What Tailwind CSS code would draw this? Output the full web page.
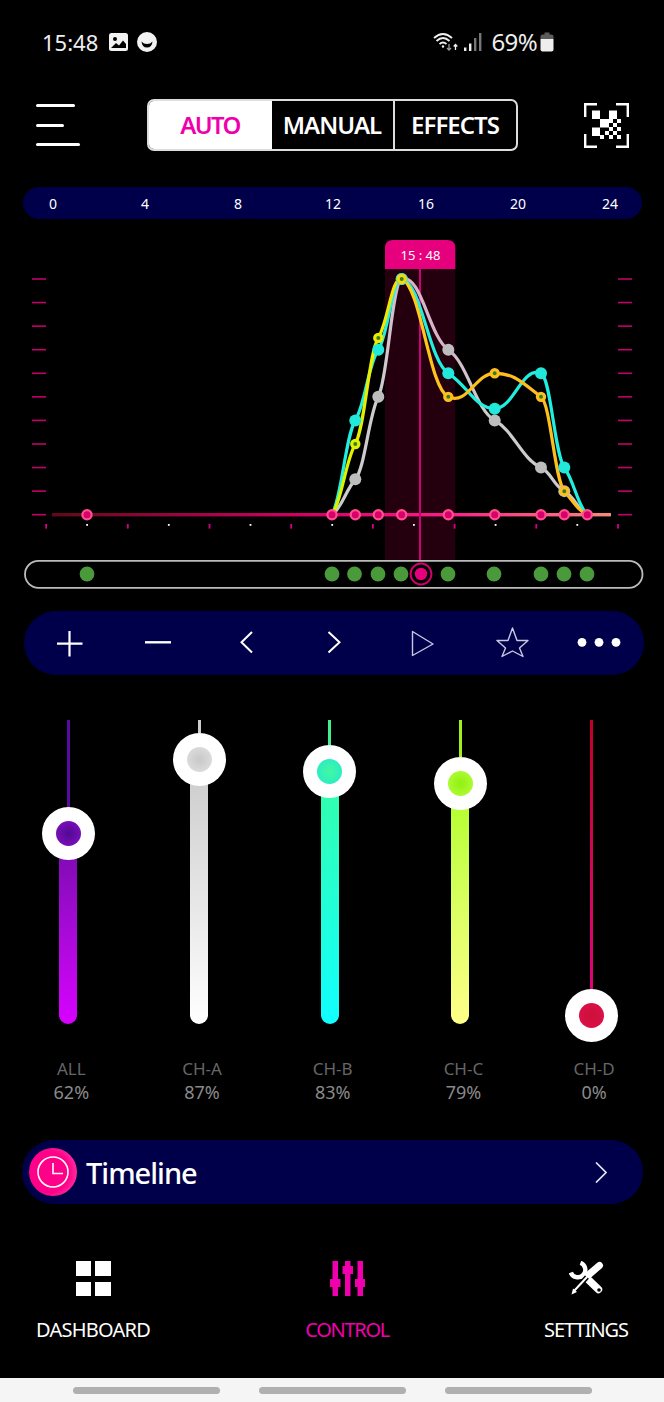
<!DOCTYPE html>
<html>
<head>
<title>Light Control</title>
<meta name="viewport" content="width=device-width, initial-scale=1.0">
<script src="https://cdn.jsdelivr.net/npm/@tailwindcss/browser@4"></script>
<script>
const SVG_NS = "http://www.w3.org/2000/svg";
const BASE_Y = 514.7;
const LEVEL = 23.57;
const pointX = [332, 355.3, 378.3, 401.7, 448.3, 494.7, 541, 564.3, 587.3];

const series = [
  { stroke: "url(#grayLine)", levels: [0, 1.5, 5, 10, 7, 4, 2, 1, 0], dot: "#bdbdbd" },
  { stroke: "#22eee0", levels: [0, 4, 7, 10, 6, 4.5, 6, 2, 0], dot: "#22e8dc" },
  { stroke: "url(#yellowLine)", levels: [0, 3, 7.5, 10, 5, 6, 5, 1, 0], ring: true },
];

function el(parent, name, attrs) {
  const node = document.createElementNS(SVG_NS, name);
  for (const key in attrs) node.setAttribute(key, attrs[key]);
  parent.appendChild(node);
  return node;
}

// spline with flattened tangents, gives the wavy look of the chart
function curvePath(pts) {
  const slope = (i) => {
    const a = pts[i - 1] ?? pts[i];
    const b = pts[i + 1] ?? pts[i];
    return ((b[1] - a[1]) / (b[0] - a[0])) * 0.45;
  };
  let d = `M${pts[0][0]} ${pts[0][1]}`;
  for (let i = 0; i < pts.length - 1; i++) {
    const [x1, y1] = pts[i];
    const [x2, y2] = pts[i + 1];
    const h = (x2 - x1) * 0.42;
    d += ` C${x1 + h} ${y1 + slope(i) * h},${x2 - h} ${y2 - slope(i + 1) * h},${x2} ${y2}`;
  }
  return d;
}

addEventListener("DOMContentLoaded", () => {
  const ticks = document.getElementById("ticks");
  for (let i = 0; i <= 10; i++) {
    const y = 279 + i * LEVEL;
    el(ticks, "line", { x1: 32, x2: 46, y1: y, y2: y, stroke: "#c4006c", "stroke-width": 1.6 });
    el(ticks, "line", { x1: 618, x2: 632, y1: y, y2: y, stroke: "#c4006c", "stroke-width": 1.6 });
  }
  for (let i = 0; i < 8; i++) {
    el(ticks, "rect", { x: 45.2 + i * 81.7, y: 524, width: 1.8, height: 4.6, fill: "#d4008a" });
    if (i < 7) el(ticks, "rect", { x: 86.2 + i * 81.7, y: 524, width: 1.8, height: 1.8, fill: "#ffffff" });
  }

  const curves = document.getElementById("curves");
  for (const s of series) {
    const pts = s.levels.map((lv, i) => [pointX[i], BASE_Y - lv * LEVEL]);
    el(curves, "path", { d: curvePath(pts), fill: "none", stroke: s.stroke, "stroke-width": 3.2 });
  }
  for (const s of series) {
    s.levels.forEach((lv, i) => {
      if (i === 0 || i === 8) return;
      const y = BASE_Y - lv * LEVEL;
      if (s.ring) {
        el(curves, "circle", { cx: pointX[i], cy: y, r: 3.6, fill: "#2f7f28", stroke: s.stroke, "stroke-width": 3.2 });
      } else {
        el(curves, "circle", { cx: pointX[i], cy: y, r: 6, fill: s.dot });
      }
    });
  }

  const basePoints = document.getElementById("basePoints");
  for (const x of [87, ...pointX]) {
    el(basePoints, "circle", { cx: x, cy: BASE_Y, r: 4.6, fill: "#d8006c", stroke: "#ff4f8e", "stroke-width": 2.2 });
  }

  const trackDots = document.getElementById("trackDots");
  for (const x of [87, 332, 354.5, 378, 401, 448, 494, 541, 564, 587]) {
    el(trackDots, "circle", { cx: x, cy: 574, r: 7.4, fill: "#4a9a3c" });
  }
});
</script>
</head>
<body class="bg-black">
<div class="flex flex-col w-[664px] h-[1402px] bg-black text-white overflow-hidden font-['Noto_Sans',sans-serif]">

  <!-- status bar -->
  <div class="flex items-center justify-between h-[83px] pl-[42px] pr-[110px] shrink-0 text-[#eeeeee]">
    <div class="flex items-center">
      <span class="text-[22px] leading-none">15:48</span>
      <svg class="ml-[11px]" width="19" height="18" viewBox="0 0 19 18">
        <rect width="19" height="18" rx="2.5" fill="#f2f2f2"/>
        <circle cx="6" cy="6" r="2" fill="#000"/>
        <path d="M2 15 L7 10 L10 12.5 L14 7.5 L17 11 L17 15 Z" fill="#000"/>
      </svg>
      <svg class="ml-[9px]" width="20" height="20" viewBox="0 0 20 20">
        <circle cx="10" cy="10" r="10" fill="#f2f2f2"/>
        <path d="M4.5 9.5 Q5 15.5 10 15.5 Q15 15.5 15.5 9.5 Q13.5 12 10 12 Q6.5 12 4.5 9.5 Z" fill="#000"/>
      </svg>
    </div>
    <div class="flex items-center">
      <svg width="25" height="19" viewBox="0 0 25 19" fill="none" stroke="#f0f0f0" stroke-width="1.8">
        <path d="M1 6 Q10 -2 19 6"/>
        <path d="M3.5 9 Q10 3 16.5 9"/>
        <path d="M6.5 12 Q10 9 13.5 12"/>
        <circle cx="10" cy="14.5" r="1.2" fill="#f0f0f0" stroke="none"/>
        <path d="M16 12 V18 M14 16 L16 18 L18 16" stroke-width="1.3" stroke="#999"/>
        <path d="M22.5 18 V12.5 M20.7 14.5 L22.5 12.5 L24.3 14.5" stroke-width="1.3"/>
      </svg>
      <svg class="ml-[6px]" width="18" height="18" viewBox="0 0 18 18">
        <rect x="0" y="14.5" width="2.4" height="3.5" fill="#eeeeee"/>
        <rect x="5" y="10.5" width="2.4" height="7.5" fill="#eeeeee"/>
        <rect x="10" y="5" width="2.4" height="13" fill="#777777"/>
        <rect x="15" y="0" width="2.4" height="18" fill="#777777"/>
      </svg>
      <span class="ml-[9px] text-[24px] leading-none tracking-[-0.6px]">69%</span>
      <svg class="ml-[3px]" width="14" height="20" viewBox="0 0 14 20">
        <path d="M4.5 0.5 H9.5 V2.5 H11.5 Q13.5 2.5 13.5 4.5 V7 H0.5 V4.5 Q0.5 2.5 2.5 2.5 H4.5 Z" fill="#5c5c5c"/>
        <path d="M0.5 7 H13.5 V17.5 Q13.5 19.5 11.5 19.5 H2.5 Q0.5 19.5 0.5 17.5 Z" fill="#eeeeee"/>
      </svg>
    </div>
  </div>

  <!-- header -->
  <div class="flex items-center justify-between h-[52px] mt-[16px] pl-[36px] pr-[35px] shrink-0">
    <div class="flex flex-col gap-[16.5px] w-[44px]">
      <div class="h-[3px] w-[39px] bg-white rounded-full"></div>
      <div class="h-[3px] w-[28px] bg-white rounded-full"></div>
      <div class="h-[3px] w-[44px] bg-white rounded-full"></div>
    </div>
    <div class="flex w-[371px] h-[52px] border-2 border-[#dddddd] rounded-[7px] overflow-hidden text-[24px] font-semibold tracking-[-1px]">
      <div class="flex items-center justify-center w-[123px] bg-white text-[#f000ac] tracking-[-1.6px]">AUTO</div>
      <div class="flex items-center justify-center w-[123px] border-r-2 border-[#dddddd]">MANUAL</div>
      <div class="flex items-center justify-center flex-1">EFFECTS</div>
    </div>
    <svg width="45" height="45" viewBox="0 0 45 45" fill="#ffffff">
      <path d="M1.2 14 V1.2 H13 M32 1.2 H43.8 V14 M1.2 31 V43.8 H13 M32 43.8 H43.8 V31" fill="none" stroke="#ffffff" stroke-width="2.4"/>
      <rect x="8" y="7.5" width="8" height="8.5"/>
      <rect x="25" y="7.5" width="8" height="8.5"/>
      <rect x="16" y="16" width="9" height="8.5"/>
      <rect x="8" y="24.5" width="8" height="8.5"/>
      <rect x="25" y="16" width="4" height="4"/>
      <rect x="33" y="16" width="4" height="4"/>
      <rect x="29" y="20" width="4" height="4"/>
      <rect x="33" y="24" width="4" height="4"/>
      <rect x="25" y="24" width="4" height="4"/>
      <rect x="29" y="28" width="4" height="4"/>
      <rect x="21" y="28" width="4" height="4"/>
      <rect x="16" y="32" width="4" height="4"/>
      <rect x="25" y="32" width="4" height="4"/>
      <rect x="33" y="32" width="4" height="4"/>
    </svg>
  </div>

  <!-- hours -->
  <div class="flex items-center h-[32px] mt-[36px] mx-[22.5px] pl-[18.5px] bg-[#00004a] rounded-full text-[14px] shrink-0">
    <span class="w-[24px] text-center">0</span>
    <span class="w-[24px] ml-[68px] text-center">4</span>
    <span class="w-[24px] ml-[69px] text-center">8</span>
    <span class="w-[24px] ml-[71px] text-center">12</span>
    <span class="w-[24px] ml-[69px] text-center">16</span>
    <span class="w-[24px] ml-[68px] text-center">20</span>
    <span class="w-[24px] ml-[68px] text-center">24</span>
  </div>

  <!-- chart and time track -->
  <svg class="shrink-0" width="664" height="371" viewBox="0 219 664 371">
    <defs>
      <linearGradient id="baseLine" gradientUnits="userSpaceOnUse" x1="52" x2="611" y1="0" y2="0">
        <stop offset="0" stop-color="#5e0a1a"/>
        <stop offset="0.5" stop-color="#e0006f"/>
        <stop offset="0.72" stop-color="#ff1f8a"/>
        <stop offset="1" stop-color="#f88a7a"/>
      </linearGradient>
      <linearGradient id="yellowLine" gradientUnits="userSpaceOnUse" x1="340" x2="450" y1="0" y2="0">
        <stop offset="0" stop-color="#d8f500"/>
        <stop offset="0.4" stop-color="#f0ea00"/>
        <stop offset="0.7" stop-color="#ffc81a"/>
        <stop offset="1" stop-color="#ffbe1e"/>
      </linearGradient>
      <linearGradient id="grayLine" gradientUnits="userSpaceOnUse" x1="340" x2="480" y1="0" y2="0">
        <stop offset="0" stop-color="#cccccc"/>
        <stop offset="0.3" stop-color="#cccccc"/>
        <stop offset="0.45" stop-color="#d8b4c8"/>
        <stop offset="0.75" stop-color="#d8b4c8"/>
        <stop offset="1" stop-color="#cccccc"/>
      </linearGradient>
    </defs>
    <rect x="385" y="268" width="70.3" height="292" fill="#24000f"/>
    <g id="ticks"></g>
    <path d="M385 269 V248 Q385 240 393 240 H447.3 Q455.3 240 455.3 248 V269 Z" fill="#e6007e"/>
    <text x="420.5" y="259.5" text-anchor="middle" font-size="13" fill="#ffffff">15 : 48</text>
    <rect x="52" y="513" width="559" height="3.4" fill="url(#baseLine)"/>
    <line x1="420" x2="420" y1="269" y2="562" stroke="#d0007a" stroke-width="2"/>
    <g id="curves"></g>
    <g id="basePoints"></g>
    <rect x="25" y="560.8" width="617.5" height="27" rx="13.5" fill="#000000" stroke="#bbbbbb" stroke-width="1.8"/>
    <g id="trackDots"></g>
    <circle cx="421" cy="574" r="10.4" fill="#000000" stroke="#d0006f" stroke-width="2"/>
    <circle cx="421" cy="574" r="6.2" fill="#e6007e"/>
  </svg>

  <!-- chart tools -->
  <div class="h-[64px] mt-[21px] ml-[24px] mr-[20px] bg-[#00004a] rounded-[32px] shrink-0">
    <svg class="block" width="620" height="64" viewBox="24 611 620 64" fill="none" stroke="#ffffff">
      <path d="M69.5 631 V656.5 M57 643.7 H82.5" stroke-width="2.2"/>
      <path d="M145 642.3 H171" stroke-width="2.4"/>
      <path d="M252 632 L241.5 642.3 L252 652.5" stroke-width="2"/>
      <path d="M328.5 632 L339.5 642.3 L328.5 652.5" stroke-width="2"/>
      <path d="M412.5 631.5 L433 644 L412.5 655.5 Z" stroke="#c8c8e4" stroke-width="1.4" stroke-linejoin="round"/>
      <path d="M512.5 628 L517 640.5 L528 640.5 L519.5 648 L523 656.5 L512.5 651 L502 656.5 L505.5 648 L497 640.5 L508 640.5 Z" stroke="#c8c8e4" stroke-width="1.4" stroke-linejoin="round"/>
      <circle cx="582" cy="642.3" r="4.4" fill="#ffffff" stroke="none"/>
      <circle cx="599" cy="642.3" r="4.4" fill="#ffffff" stroke="none"/>
      <circle cx="616" cy="642.3" r="4.4" fill="#ffffff" stroke="none"/>
    </svg>
  </div>

  <!-- channel sliders -->
  <div class="flex pl-[3px] mt-[45px] h-[304px] shrink-0">
    <div class="flex flex-col items-center w-[130.7px]">
      <div class="w-[3px] h-[87px] shrink-0 bg-[#5a0aa0]"></div>
      <div class="relative z-10 flex items-center justify-center w-[53px] h-[53px] shrink-0 rounded-full bg-white">
        <div class="w-[25px] h-[25px] rounded-full bg-[radial-gradient(circle,#4f0a90,#8a10c8)]"></div>
      </div>
      <div class="flex-1 w-[18px] -mt-[20px] rounded-b-full bg-gradient-to-b from-[#7a0ab0] to-[#d800ff]"></div>
    </div>
    <div class="flex flex-col items-center w-[130.7px]">
      <div class="w-[3px] h-[13px] shrink-0 bg-[#cccccc]"></div>
      <div class="relative z-10 flex items-center justify-center w-[53px] h-[53px] shrink-0 rounded-full bg-white">
        <div class="w-[25px] h-[25px] rounded-full bg-[radial-gradient(circle,#c8c8c8,#e2e2e2)]"></div>
      </div>
      <div class="flex-1 w-[18px] -mt-[20px] rounded-b-full bg-gradient-to-b from-[#cccccc] to-[#ffffff]"></div>
    </div>
    <div class="flex flex-col items-center w-[130.7px]">
      <div class="w-[3px] h-[25px] shrink-0 bg-[#40f090]"></div>
      <div class="relative z-10 flex items-center justify-center w-[53px] h-[53px] shrink-0 rounded-full bg-white">
        <div class="w-[25px] h-[25px] rounded-full bg-[radial-gradient(circle,#44f8a0,#22e8d0)]"></div>
      </div>
      <div class="flex-1 w-[18px] -mt-[20px] rounded-b-full bg-gradient-to-b from-[#33ffaa] to-[#11ffff]"></div>
    </div>
    <div class="flex flex-col items-center w-[130.7px]">
      <div class="w-[3px] h-[37px] shrink-0 bg-[#a0f020]"></div>
      <div class="relative z-10 flex items-center justify-center w-[53px] h-[53px] shrink-0 rounded-full bg-white">
        <div class="w-[25px] h-[25px] rounded-full bg-[radial-gradient(circle,#90f010,#b8ff40)]"></div>
      </div>
      <div class="flex-1 w-[18px] -mt-[20px] rounded-b-full bg-gradient-to-b from-[#b0ff22] to-[#ffff88]"></div>
    </div>
    <div class="flex flex-col items-center w-[130.7px]">
      <div class="w-[3px] h-[269px] shrink-0 bg-gradient-to-b from-[#c00025] to-[#e0007a]"></div>
      <div class="relative z-10 flex items-center justify-center w-[53px] h-[53px] shrink-0 rounded-full bg-white">
        <div class="w-[25px] h-[25px] rounded-full bg-[radial-gradient(circle,#cc1038,#e0104e)]"></div>
      </div>
    </div>
  </div>

  <div class="flex pl-[6px] mt-[33px] text-[17px] leading-[23.5px] text-center shrink-0">
    <div class="w-[130.7px]"><div class="text-[#666666]">ALL</div><div class="text-[18px] text-[#8a8a8a]">62%</div></div>
    <div class="w-[130.7px]"><div class="text-[#666666]">CH-A</div><div class="text-[18px] text-[#8a8a8a]">87%</div></div>
    <div class="w-[130.7px]"><div class="text-[#666666]">CH-B</div><div class="text-[18px] text-[#8a8a8a]">83%</div></div>
    <div class="w-[130.7px]"><div class="text-[#666666]">CH-C</div><div class="text-[18px] text-[#8a8a8a]">79%</div></div>
    <div class="w-[130.7px]"><div class="text-[#666666]">CH-D</div><div class="text-[18px] text-[#8a8a8a]">0%</div></div>
  </div>

  <!-- timeline -->
  <div class="flex items-center h-[64px] mt-[36px] ml-[22px] mr-[21px] pl-[7px] pr-[36px] bg-[#00004a] rounded-[32px] shrink-0">
    <div class="flex items-center justify-center w-[48px] h-[48px] rounded-full bg-[radial-gradient(circle_at_40%_50%,#ff0088_55%,#ff5ab0)]">
      <svg width="32" height="32" viewBox="0 0 32 32" fill="none" stroke="#ffffff" stroke-width="1.6">
        <circle cx="16" cy="16" r="15"/>
        <path d="M16 7 V17.5 H26"/>
      </svg>
    </div>
    <span class="ml-[9px] text-[29px] leading-none font-medium tracking-[-1px]">Timeline</span>
    <svg class="ml-auto" width="12" height="21" viewBox="0 0 12 21" fill="none" stroke="#e4e4f4" stroke-width="1.7">
      <path d="M1 0.5 L11 10.5 L1 20.5"/>
    </svg>
  </div>

  <!-- bottom navigation -->
  <div class="flex justify-between px-[36px] mt-[57px] text-[20px] leading-[24px] shrink-0">
    <div class="flex flex-col items-center gap-[22px] tracking-[-0.75px]">
      <div class="grid grid-cols-2 gap-x-[4px] gap-y-[6px] w-[35px] h-[35px]">
        <div class="bg-white"></div><div class="bg-white"></div>
        <div class="bg-white"></div><div class="bg-white"></div>
      </div>
      <span>DASHBOARD</span>
    </div>
    <div class="flex flex-col items-center gap-[22px] tracking-[-1.3px] text-[#f000ac]">
      <svg width="35" height="35" viewBox="0 0 35 35" fill="#f000ac">
        <rect x="2.5" y="0" width="5.5" height="35"/><rect x="0" y="18" width="10.5" height="8"/>
        <rect x="15" y="0" width="5.5" height="35"/><rect x="12.5" y="5" width="10.5" height="8"/>
        <rect x="27.5" y="0" width="5.5" height="35"/><rect x="25" y="18" width="10" height="8"/>
      </svg>
      <span>CONTROL</span>
    </div>
    <div class="flex flex-col items-center gap-[22px] tracking-[-1.05px]">
      <svg width="35" height="35" viewBox="0 0 35 35" fill="none" stroke="#ffffff">
        <path d="M11.5 1.8 A7.5 7.5 0 1 1 1.8 11.5" stroke-width="4.4"/>
        <path d="M15.5 15 L29.5 28.5" stroke-width="7.4" stroke-linecap="round"/>
        <circle cx="30" cy="29" r="1.8" fill="#000000" stroke="none"/>
        <path d="M3.5 32 L18 16" stroke="#000000" stroke-width="5"/>
        <path d="M5 30 L18 16" stroke-width="2"/>
        <path d="M2.5 33.5 L4 27.5 L8 31 Z" fill="#ffffff" stroke="none"/>
        <path d="M20 13.5 L30.5 4.5" stroke-width="7" stroke-linecap="round"/>
      </svg>
      <span>SETTINGS</span>
    </div>
  </div>

  <!-- gesture bar -->
  <div class="flex items-center gap-[39px] h-[24px] mt-auto pl-[72.5px] bg-[#f5f5f5] shrink-0">
    <div class="w-[147px] h-[7px] rounded-full bg-[#b0b0b0]"></div>
    <div class="w-[147px] h-[7px] rounded-full bg-[#b0b0b0]"></div>
    <div class="w-[147px] h-[7px] rounded-full bg-[#b0b0b0]"></div>
  </div>
</div>
</body>
</html>
